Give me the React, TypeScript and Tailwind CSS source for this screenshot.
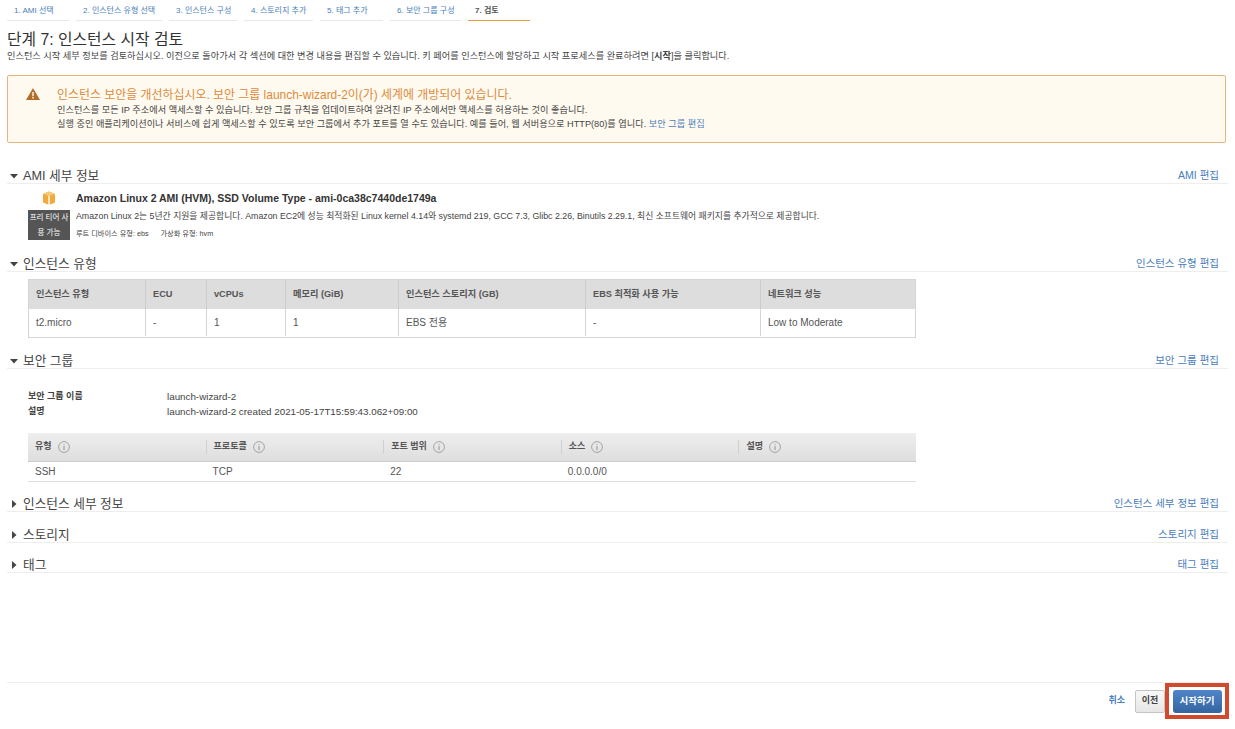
import { ReactNode } from 'react';

const tabs = [
  { label: '1. AMI 선택', w: 'w-[62px]' },
  { label: '2. 인스턴스 유형 선택', w: 'w-[86px]' },
  { label: '3. 인스턴스 구성', w: 'w-[68px]' },
  { label: '4. 스토리지 추가', w: 'w-[69px]' },
  { label: '5. 태그 추가', w: 'w-[63px]' },
  { label: '6. 보안 그룹 구성', w: 'w-[71px]' },
];

const typeCols = ['w-[117px]', 'w-[61px]', 'w-[79px]', 'w-[113px]', 'w-[187px]', 'w-[175px]', 'flex-1'];
const typeHead = ['인스턴스 유형', 'ECU', 'vCPUs', '메모리 (GiB)', '인스턴스 스토리지 (GB)', 'EBS 최적화 사용 가능', '네트워크 성능'];
const typeRow = ['t2.micro', '-', '1', '1', 'EBS 전용', '-', 'Low to Moderate'];

const ruleHead = ['유형', '프로토콜', '포트 범위', '소스', '설명'];
const ruleRow = ['SSH', 'TCP', '22', '0.0.0.0/0', ''];

function Section({ title, edit, open, h }: { title: string; edit: string; open?: boolean; h: string }) {
  return (
    <div className={`mx-[7px] flex items-end justify-between border-b border-[#eeeeee] pl-[3px] pr-[9px] ${h}`}>
      <div className="flex items-center gap-[5px]">
        <svg width="8" height="8" viewBox="0 0 8 8" className="text-[#444]">
          {open ? <path d="M0 2h8L4 6.5z" fill="currentColor" /> : <path d="M2 0v8l4.5-4z" fill="currentColor" />}
        </svg>
        <span className="text-[12.7px] leading-[14px] text-[#444]">{title}</span>
      </div>
      <a className="text-[10.5px] leading-[16px] text-[#4a80bd]">{edit}</a>
    </div>
  );
}

function Info() {
  return (
    <svg width="12" height="12" viewBox="0 0 12 12" className="shrink-0 text-[#888]">
      <circle cx="6" cy="6" r="5.4" fill="none" stroke="currentColor" strokeWidth="0.7" />
      <path d="M6 3v.9M6 5v4" stroke="currentColor" strokeWidth="0.9" />
    </svg>
  );
}

function Cell({ children, className }: { children?: ReactNode; className: string }) {
  return <div className={`flex items-center px-[7px] ${className}`}>{children}</div>;
}

export default function App() {
  return (
    <div className="flex h-[729px] w-[1235px] flex-col overflow-hidden bg-white font-['Liberation_Sans','Noto_Sans_CJK_KR',sans-serif] text-[#444]">
      {/* wizard tabs */}
      <div className="ml-[7px] flex h-[21px] gap-[7px]">
        {tabs.map((t) => (
          <div key={t.label} className={`${t.w} flex items-center border-b border-[#e8e8e8] pl-[7px] pt-[2px] text-[8px] text-[#4a80bd]`}>
            {t.label}
          </div>
        ))}
        <div className="flex w-[62px] items-center border-b border-[#ec9a3c] pl-[7px] pt-[2px] text-[8px] font-bold text-[#555]">
          7. 검토
        </div>
      </div>

      <h1 className="ml-[7px] mt-[10px] text-[15.8px] leading-[18px] text-[#333]">단계 7: 인스턴스 시작 검토</h1>
      <p className="ml-[7px] mt-[1px] text-[9.2px] leading-[13px] text-[#444]">
        인스턴스 시작 세부 정보를 검토하십시오. 이전으로 돌아가서 각 섹션에 대한 변경 내용을 편집할 수 있습니다. 키 페어를 인스턴스에 할당하고 시작 프로세스를 완료하려면 [<b>시작</b>]을 클릭합니다.
      </p>

      {/* warning */}
      <div className="ml-[7px] mr-[9px] mt-[12px] flex h-[68px] rounded-[2px] border border-[#e8b47c] bg-[#fffaef] pl-[18px] pt-[12px]">
        <svg width="14" height="12" viewBox="0 0 14 12" className="shrink-0">
          <path d="M7 0l7 12H0z" fill="#b0702a" />
          <path d="M6.3 4h1.4v4.2H6.3zM6.3 9h1.4v1.4H6.3z" fill="#fffaef" />
        </svg>
        <div className="ml-[17px]">
          <div className="text-[11.95px] leading-[15px] text-[#dd8a3c]">인스턴스 보안을 개선하십시오. 보안 그룹 launch-wizard-2이(가) 세계에 개방되어 있습니다.</div>
          <div className="mt-[1px] text-[9.2px] leading-[13px] text-[#444]">인스턴스를 모든 IP 주소에서 액세스할 수 있습니다. 보안 그룹 규칙을 업데이트하여 알려진 IP 주소에서만 액세스를 허용하는 것이 좋습니다.</div>
          <div className="mt-[1px] text-[9.2px] leading-[13px] text-[#444]">
            실행 중인 애플리케이션이나 서비스에 쉽게 액세스할 수 있도록 보안 그룹에서 추가 포트를 열 수도 있습니다. 예를 들어, 웹 서버용으로 HTTP(80)를 엽니다. <a className="text-[#4a80bd]">보안 그룹 편집</a>
          </div>
        </div>
      </div>

      <Section title="AMI 세부 정보" edit="AMI 편집" open h="h-[41px]" />

      {/* AMI */}
      <div className="ml-[28px] flex h-[60px] pt-[7px]">
        <div className="flex w-[42px] shrink-0 flex-col items-center">
          <svg width="14" height="14" viewBox="0 0 14 14">
            <path d="M1 3l6-2.5L13 3v8.5L7 14l-6-2.5z" fill="#f0a93c" />
            <path d="M6.3 4.5h1.4V14H6.3z" fill="#fff" />
            <path d="M1 3l6 2 6-2-6-2.5z" fill="#f7c877" />
          </svg>
          <div className="mt-[5px] flex h-[30px] w-[42px] items-center justify-center bg-[#555] text-center text-[7.5px] leading-[15px] text-white">
            프리 티어 사용 가능
          </div>
        </div>
        <div className="ml-[6px]">
          <div className="text-[10.5px] font-bold leading-[14px] text-[#333]">Amazon Linux 2 AMI (HVM), SSD Volume Type - ami-0ca38c7440de1749a</div>
          <div className="mt-[5px] text-[8.8px] leading-[12px] text-[#444]">Amazon Linux 2는 5년간 지원을 제공합니다. Amazon EC2에 성능 최적화된 Linux kernel 4.14와 systemd 219, GCC 7.3, Glibc 2.26, Binutils 2.29.1, 최신 소프트웨어 패키지를 추가적으로 제공합니다.</div>
          <div className="mt-[7px] flex gap-[12px] text-[7.2px] leading-[10px] text-[#444]">
            <span>루트 디바이스 유형: ebs</span>
            <span>가상화 유형: hvm</span>
          </div>
        </div>
      </div>

      <Section title="인스턴스 유형" edit="인스턴스 유형 편집" open h="h-[28px]" />

      {/* instance type table */}
      <div className="ml-[28px] mt-[7px] w-[888px] border border-[#d5d5d5] text-[#555]">
        <div className="flex h-[29px] bg-[#dddddd] text-[9.2px] font-bold">
          {typeHead.map((c, i) => (
            <Cell key={c} className={`${typeCols[i]} ${i < 6 ? 'border-r border-[#cccccc]' : ''}`}>{c}</Cell>
          ))}
        </div>
        <div className="flex h-[28px] pb-[1px] text-[10px]">
          {typeRow.map((c, i) => (
            <Cell key={i} className={`${typeCols[i]} ${i < 6 ? 'border-r border-[#d5d5d5]' : ''}`}>{c}</Cell>
          ))}
        </div>
      </div>

      <Section title="보안 그룹" edit="보안 그룹 편집" open h="h-[31px]" />

      {/* security group */}
      <div className="ml-[28px] mt-[20px] text-[9px] leading-[15px]">
        <div className="flex">
          <b className="w-[139px]">보안 그룹 이름</b>
          <span className="text-[9.8px]">launch-wizard-2</span>
        </div>
        <div className="flex">
          <b className="w-[139px]">설명</b>
          <span className="text-[9.8px]">launch-wizard-2 created 2021-05-17T15:59:43.062+09:00</span>
        </div>
      </div>

      <div className="ml-[28px] mt-[14px] w-[888px] text-[#555]">
        <div className="grid h-[29px] grid-cols-5 items-center border-b border-[#cccccc] bg-gradient-to-b from-[#eeeeee] to-[#dedede] text-[9px] font-bold">
          {ruleHead.map((c, i) => (
            <div key={c} className={`flex h-[14px] items-center gap-[6px] pl-[7px] ${i > 0 ? 'border-l border-[#d0d0d0]' : ''}`}>
              <span>{c}</span>
              <Info />
            </div>
          ))}
        </div>
        <div className="grid h-[20px] grid-cols-5 items-center border-b border-[#dddddd] text-[10px]">
          {ruleRow.map((c, i) => (
            <div key={i} className="pl-[7px]">{c}</div>
          ))}
        </div>
      </div>

      <Section title="인스턴스 세부 정보" edit="인스턴스 세부 정보 편집" h="h-[30px]" />
      <Section title="스토리지" edit="스토리지 편집" h="h-[31px]" />
      <Section title="태그" edit="태그 편집" h="h-[30px]" />

      {/* footer */}
      <div className="mx-[7px] mb-[10px] mt-auto flex h-[37px] items-center justify-end border-t border-[#eeeeee]">
        <a className="text-[9px] font-bold text-[#4a80bd]">취소</a>
        <button className="ml-[10px] h-[23px] w-[30px] rounded-[2px] border border-[#c4c4c4] bg-gradient-to-b from-[#f8f8f8] to-[#e6e6e6] text-[9px] font-bold text-[#444]">이전</button>
        <div className="-mr-[1px] flex h-[36px] w-[64px] items-center justify-center border-[4px] border-[#d24a2d] bg-white">
          <button className="h-[23px] w-[49px] rounded-[3px] bg-gradient-to-b from-[#4f85c9] to-[#33659f] text-[9.5px] font-bold text-white">시작하기</button>
        </div>
      </div>
    </div>
  );
}
